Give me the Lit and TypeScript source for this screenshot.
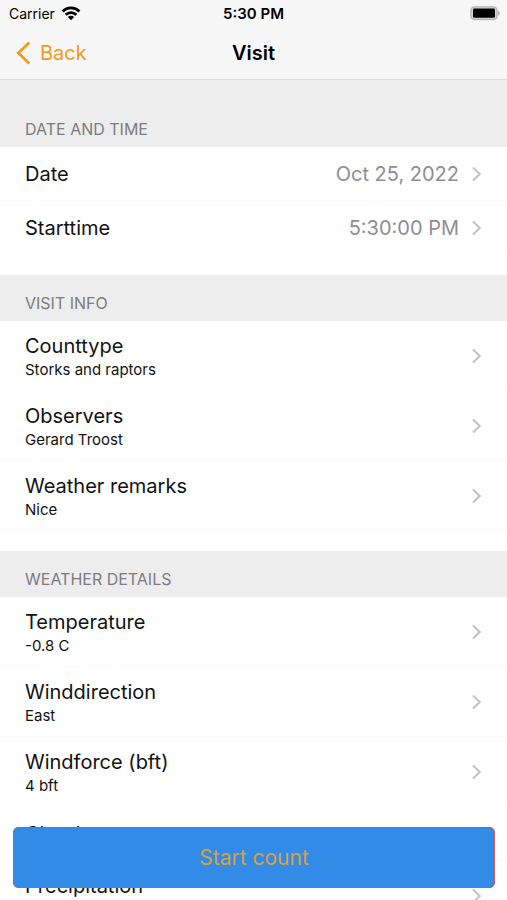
import { LitElement, html, css, nothing } from "lit";
import { customElement, property } from "lit/decorators.js";

interface Row {
  title: string;
  note?: string;
  value?: string;
}

interface Section {
  heading: string;
  rows: Row[];
}

const SECTIONS: Section[] = [
  {
    heading: "Date and time",
    rows: [
      { title: "Date", value: "Oct 25, 2022" },
      { title: "Starttime", value: "5:30:00 PM" },
    ],
  },
  {
    heading: "Visit info",
    rows: [
      { title: "Counttype", note: "Storks and raptors" },
      { title: "Observers", note: "Gerard Troost" },
      { title: "Weather remarks", note: "Nice" },
    ],
  },
  {
    heading: "Weather details",
    rows: [
      { title: "Temperature", note: "-0.8 C" },
      { title: "Winddirection", note: "East" },
      { title: "Windforce (bft)", note: "4 bft" },
      { title: "Clouds" },
      { title: "Precipitation", note: "" },
    ],
  },
];

@customElement("status-bar")
class StatusBar extends LitElement {
  static styles = css`
    :host {
      display: grid;
      grid-template-columns: 1fr auto 1fr;
      align-items: center;
      height: 27px;
      padding: 0 7px;
      font-size: 14px;
      line-height: 20px;
    }
    .carrier {
      display: flex;
      align-items: center;
      gap: 6px;
      padding-left: 2px;
    }
    .time {
      font-size: 15px;
      font-weight: 600;
    }
    .battery {
      justify-self: end;
    }
    svg {
      display: block;
    }
  `;

  render() {
    return html`
      <span class="carrier">
        Carrier
        <svg width="20" height="15" viewBox="0 0 20 15" aria-label="Wi-Fi">
          <g fill="none" stroke="#000" stroke-width="2.8">
            <path d="M1.6 5.4a12 12 0 0 1 16.8 0" />
            <path d="M4.7 8.7a7.6 7.6 0 0 1 10.6 0" />
          </g>
          <path d="M10 14.2 6.9 11.1a4.4 4.4 0 0 1 6.2 0z" />
        </svg>
      </span>
      <span class="time">5:30 PM</span>
      <svg class="battery" width="30" height="15" viewBox="0 0 30 15" aria-label="Battery full">
        <rect x="1" y="0.9" width="26" height="12.6" rx="3.6" fill="#d8d8d8" stroke="#b4b4b4" stroke-width="1.4" />
        <rect x="3" y="2.6" width="22" height="9.2" rx="1.2" />
        <path d="M28 4.8c2.4 1 2.4 3.8 0 4.8z" fill="#b0b0b0" />
      </svg>
    `;
  }
}

@customElement("list-row")
class ListRow extends LitElement {
  @property({ attribute: false }) row!: Row;

  static styles = css`
    :host {
      display: block;
    }
    .row {
      display: flex;
      align-items: center;
      gap: 12px;
      width: 100%;
      height: 54px;
      padding: 0 25px;
      border: 0;
      border-bottom: 1px solid #fbfbfb;
      background: #fff;
      color: #111;
      font: inherit;
      font-size: 20px;
      line-height: 28px;
      text-align: left;
      box-sizing: border-box;
    }
    .tall {
      height: 70px;
    }
    .label {
      flex: 1;
      display: flex;
      flex-direction: column;
    }
    .note {
      min-height: 20px;
      font-size: 15px;
      line-height: 20px;
    }
    .value {
      color: #8e8e90;
    }
    svg {
      display: block;
      flex: none;
    }
  `;

  render() {
    const { title, note, value } = this.row;
    const tall = note !== undefined;
    return html`
      <button class="row ${tall ? "tall" : ""}">
        <span class="label">
          <span>${title}</span>
          ${tall ? html`<span class="note">${note}</span>` : nothing}
        </span>
        ${value ? html`<span class="value">${value}</span>` : nothing}
        <svg width="11" height="16" viewBox="0 0 11 16" aria-hidden="true">
          <path d="M2 1.5 8.8 8 2 14.5" fill="none" stroke="#c2c2c4" stroke-width="2" />
        </svg>
      </button>
    `;
  }
}

@customElement("app-root")
class AppRoot extends LitElement {
  static styles = css`
    :host {
      display: flex;
      flex-direction: column;
      position: relative;
      height: 100vh;
      overflow: hidden;
      background: #fff;
      color: #000;
      font-family: Inter, "Liberation Sans", sans-serif;
    }
    .top {
      flex: none;
      background: #f7f7f7;
      border-bottom: 1px solid #dcdcdc;
    }
    .nav {
      display: grid;
      grid-template-columns: 1fr auto 1fr;
      align-items: center;
      height: 52px;
      padding: 0 16px;
    }
    .back {
      display: flex;
      align-items: center;
      gap: 9px;
      justify-self: start;
      padding: 0;
      border: 0;
      background: none;
      color: #f39a1e;
      font: inherit;
      font-size: 20px;
      line-height: 28px;
    }
    .title {
      margin: 0;
      font-size: 20px;
      line-height: 28px;
      font-weight: 600;
    }
    .list {
      flex: 1;
      min-height: 0;
      overflow: hidden;
    }
    .section {
      padding-bottom: 20px;
    }
    .heading {
      display: flex;
      align-items: flex-end;
      height: 46px;
      margin: 0;
      padding: 0 25px 8px;
      box-sizing: border-box;
      background: #ededed;
      color: #7c7c7e;
      font-size: 16px;
      line-height: 20px;
      font-weight: 400;
      text-transform: uppercase;
    }
    .section:first-child .heading {
      height: 67px;
    }
    .start {
      position: absolute;
      left: 13px;
      right: 12px;
      bottom: 12px;
      height: 61px;
      border: 1px solid #c0604a;
      border-radius: 5px;
      background: #338be8;
      color: #d9a03c;
      font: inherit;
      font-size: 21px;
      line-height: 28px;
    }
  `;

  render() {
    return html`
      <header class="top">
        <status-bar></status-bar>
        <div class="nav">
          <button class="back">
            <svg width="15" height="24" viewBox="0 0 15 24" aria-hidden="true">
              <path d="M13.4 1.4 2.2 12l11.2 10.6" fill="none" stroke="currentColor" stroke-width="2.7" />
            </svg>
            Back
          </button>
          <h1 class="title">Visit</h1>
        </div>
      </header>
      <main class="list">
        ${SECTIONS.map(
          (section) => html`
            <section class="section">
              <h2 class="heading">${section.heading}</h2>
              ${section.rows.map((row) => html`<list-row .row=${row}></list-row>`)}
            </section>
          `
        )}
      </main>
      <button class="start">Start count</button>
    `;
  }
}
